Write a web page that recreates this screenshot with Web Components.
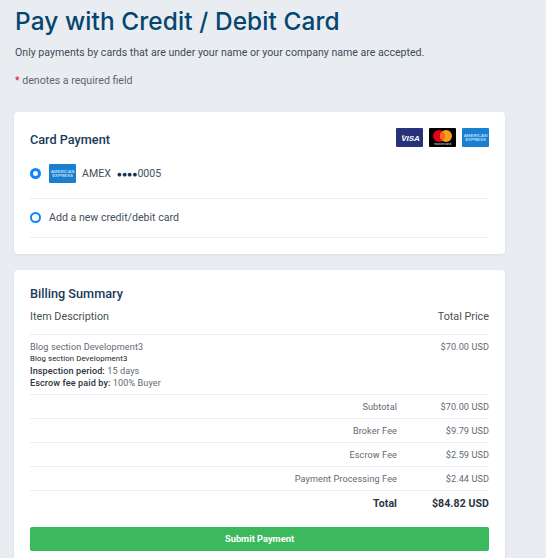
<!DOCTYPE html>
<html lang="en">
<head>
<meta charset="utf-8">
<title>Pay with Credit / Debit Card</title>
<style>
  html, body { margin: 0; height: 558px; overflow: hidden; background: #e9edf2; }
  body { font-family: Roboto, "Liberation Sans", sans-serif; font-size: 10.6px; color: #444f5c; }
  pay-page { width: 491px; margin-left: 14px; }
</style>
</head>
<body>
<pay-page>
  <pay-panel style="margin-bottom:16px">
    <card-payment></card-payment>
  </pay-panel>
  <pay-panel>
    <billing-summary></billing-summary>
  </pay-panel>
</pay-page>

<script>
const cardArt = {
  visa: `<svg viewBox="0 0 27 19" width="27" height="19"><rect width="27" height="19" rx="1" fill="#26337a"/><path d="M5.5 7h2.8l.6 2.6z" fill="#e9a03a"/><text x="14.5" y="12.8" text-anchor="middle" font-family="Liberation Sans" font-size="8" font-weight="700" font-style="italic" fill="#fff">VISA</text></svg>`,
  mastercard: `<svg viewBox="0 0 27 19" width="27" height="19"><rect width="27" height="19" rx="1" fill="#000"/><circle cx="10" cy="8" r="6" fill="#e3001b"/><circle cx="17" cy="8" r="6" fill="#f79e1b"/><path d="M13.5 3.1a6 6 0 0 1 0 9.8a6 6 0 0 1 0-9.8z" fill="#f06a1c"/><text x="13.5" y="17.3" text-anchor="middle" font-family="Roboto" font-size="3.4" fill="#ddd">mastercard</text></svg>`,
  amex: `<svg viewBox="0 0 27 19" width="27" height="19"><rect width="27" height="19" rx="1" fill="#1b7fd0"/><g font-family="Liberation Sans" font-size="4.4" font-weight="700" fill="#b9dcf6" text-anchor="middle"><text x="13.5" y="9">AMERICAN</text><text x="13.5" y="13.4">EXPRESS</text></g></svg>`
};

class PayPage extends HTMLElement {
  constructor() {
    super();
    this.attachShadow({ mode: 'open' });
    this.shadowRoot.innerHTML = `
      <style>
        :host { display: block; }
        header { margin-left: 1px; padding-top: 5px; margin-bottom: 23px; }
        h1 { margin: 0 0 8px; font: 500 24.4px/32px Inter, "Open Sans", sans-serif; color: #054570; letter-spacing: .1px; white-space: nowrap; }
        p { margin: 0; font-size: 10.6px; line-height: 16px; color: #3f4a56; white-space: nowrap; }
        p + p { margin-top: 12px; color: #5d6670; }
        b { font-weight: 400; color: #e8112d; }
      </style>
      <header>
        <h1>Pay with Credit / Debit Card</h1>
        <p>Only payments by cards that are under your name or your company name are accepted.</p>
        <p><b>*</b> denotes a required field</p>
      </header>
      <slot></slot>`;
  }
}

class PayPanel extends HTMLElement {
  constructor() {
    super();
    this.attachShadow({ mode: 'open' });
    this.shadowRoot.innerHTML = `
      <style>
        :host { display: block; background: #fff; border-radius: 4px; box-shadow: 0 1px 3px rgba(40,60,80,.08); padding: 0 16px; }
      </style>
      <slot></slot>`;
  }
}

class CardLogo extends HTMLElement {
  constructor() {
    super();
    this.attachShadow({ mode: 'open' });
    this.shadowRoot.innerHTML = `
      <style>:host { display: block; line-height: 0; } svg { display: block; }</style>
      ${cardArt[this.getAttribute('type')] || ''}`;
  }
}

class RadioOption extends HTMLElement {
  constructor() {
    super();
    this.attachShadow({ mode: 'open' });
    const on = this.hasAttribute('checked');
    this.shadowRoot.innerHTML = `
      <style>
        :host { display: flex; align-items: center; gap: 6px; border-bottom: 1px solid #e9edf2; font-size: 10.6px; color: #444f5c; white-space: nowrap; }
        .dot { box-sizing: border-box; width: 11px; height: 11px; margin-right: 2px; border-radius: 50%; border: ${on ? '3.5px' : '2px'} solid #0d84ff; background: #fff; }
      </style>
      <span class="dot"></span><slot></slot>`;
  }
}

class CardPayment extends HTMLElement {
  constructor() {
    super();
    this.attachShadow({ mode: 'open' });
    this.shadowRoot.innerHTML = `
      <style>
        :host { display: block; padding-top: 16px; padding-bottom: 16px; }
        .top { display: flex; justify-content: space-between; align-items: flex-start; height: 36px; }
        h2 { margin: 3px 0 0; font: 500 12.7px/17px Roboto, sans-serif; color: #1a3a57; }
        .logos { display: flex; gap: 6px; }
        .saved { height: 19px; padding-bottom: 15px; }
        .add { height: 37px; padding-bottom: 1px; }
        .dots { margin-left: 6px; color: #12324f; font-size: 8.5px; letter-spacing: 0; }
      </style>
      <div class="top">
        <h2>Card Payment</h2>
        <div class="logos">
          <card-logo type="visa"></card-logo>
          <card-logo type="mastercard"></card-logo>
          <card-logo type="amex"></card-logo>
        </div>
      </div>
      <radio-option checked class="saved">
        <card-logo type="amex"></card-logo>
        <span>AMEX<span class="dots">●●●●</span>0005</span>
      </radio-option>
      <radio-option class="add">Add a new credit/debit card</radio-option>`;
  }
}

class SummaryRow extends HTMLElement {
  constructor() {
    super();
    this.attachShadow({ mode: 'open' });
    const total = this.hasAttribute('total');
    this.shadowRoot.innerHTML = `
      <style>
        :host { display: grid; grid-template-columns: 1fr 92px; height: 23px; align-items: center; text-align: right; font-size: ${total ? '10.5px' : '9.1px'};
          font-weight: ${total ? 700 : 400}; color: ${total ? '#2b3440' : '#5f6973'}; border-top: 1px solid #e9edf2; letter-spacing: .1px; }
        span { padding-top: ${total ? 2 : 0}px; }
      </style>
      <span><slot></slot></span><span>${this.getAttribute('amount')}</span>`;
  }
}

class BillingSummary extends HTMLElement {
  constructor() {
    super();
    this.attachShadow({ mode: 'open' });
    this.shadowRoot.innerHTML = `
      <style>
        :host { display: block; padding-top: 15px; padding-bottom: 24px; }
        h2 { margin: 0 0 7px; font: 500 12.7px/17px Roboto, sans-serif; color: #1a3a57; }
        .head { display: flex; justify-content: space-between; height: 25px; font-size: 10.8px; line-height: 16px; color: #4b4f52; }
        .item { display: flex; justify-content: space-between; border-top: 1px solid #e9edf2; padding: 6px 0 5px; font-size: 9.1px; line-height: 12px; color: #5f6973; height: 48px; letter-spacing: .1px; }
        .item div div { height: 12px; }
        .dark { color: #222; font-size: 7.8px; }
        strong { font-weight: 500; color: #2b3440; }
        button { display: block; width: 100%; height: 24px; margin-top: 13px; padding: 0 0 2px; border: 0; border-radius: 2px; background: #3cb95d; color: #fff; font: 700 9.3px Roboto, sans-serif; }
      </style>
      <h2>Billing Summary</h2>
      <div class="head"><span>Item Description</span><span>Total Price</span></div>
      <div class="item">
        <div>
          <div>Blog section Development3</div>
          <div class="dark">Blog section Development3</div>
          <div><strong>Inspection period:</strong> 15 days</div>
          <div><strong>Escrow fee paid by:</strong> 100% Buyer</div>
        </div>
        <span>$70.00 USD</span>
      </div>
      <summary-row amount="$70.00 USD">Subtotal</summary-row>
      <summary-row amount="$9.79 USD">Broker Fee</summary-row>
      <summary-row amount="$2.59 USD">Escrow Fee</summary-row>
      <summary-row amount="$2.44 USD">Payment Processing Fee</summary-row>
      <summary-row total amount="$84.82 USD">Total</summary-row>
      <button type="button">Submit Payment</button>`;
  }
}

customElements.define('card-logo', CardLogo);
customElements.define('radio-option', RadioOption);
customElements.define('summary-row', SummaryRow);
customElements.define('pay-panel', PayPanel);
customElements.define('card-payment', CardPayment);
customElements.define('billing-summary', BillingSummary);
customElements.define('pay-page', PayPage);
</script>
</body>
</html>
